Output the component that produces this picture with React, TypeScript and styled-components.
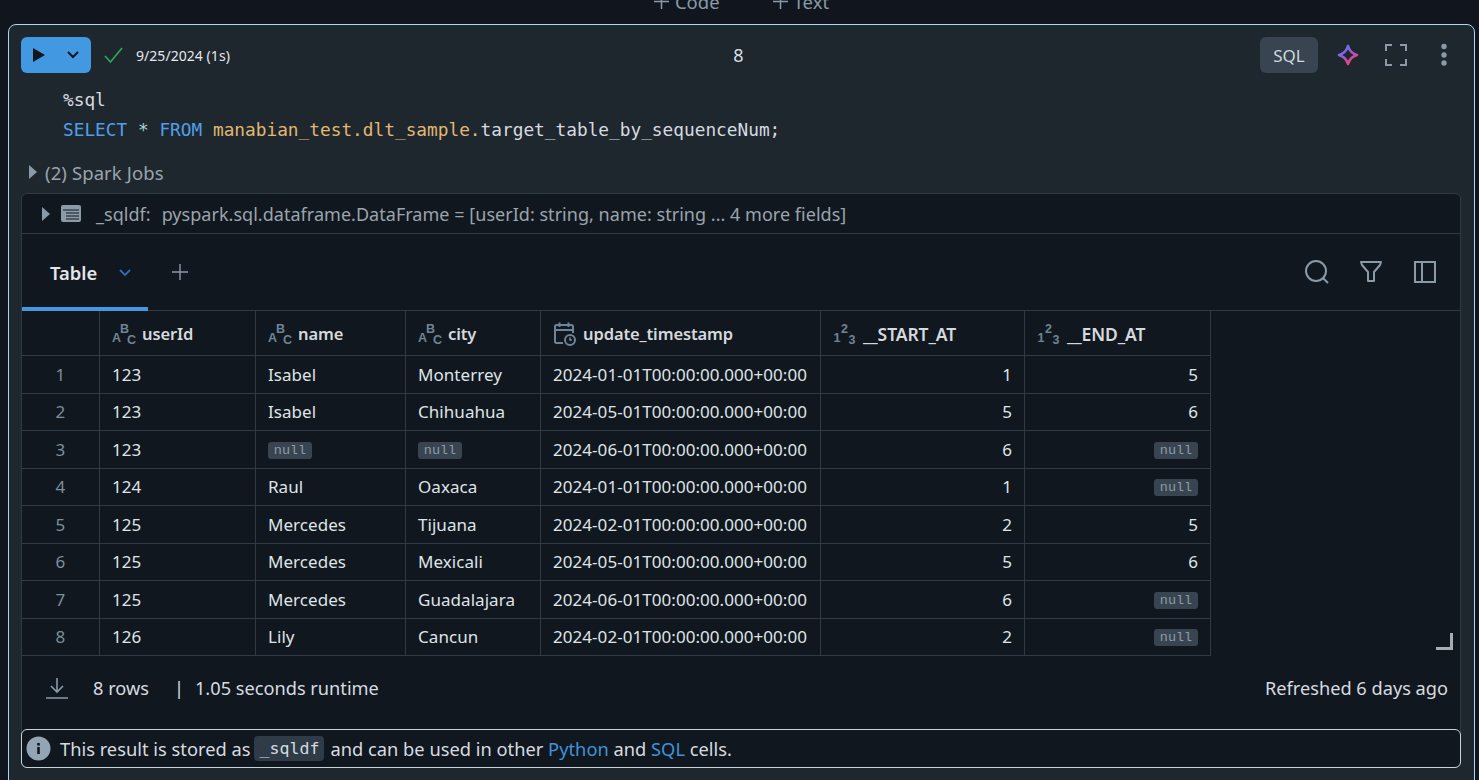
import React from "react";
import styled, { createGlobalStyle } from "styled-components";

const Global = createGlobalStyle`
  html, body { margin: 0; padding: 0; background: #11161e; }
  #root { width: 1479px; height: 780px; overflow: hidden; }
  * { box-sizing: border-box; }
`;

const SANS = `"Noto Sans", "Open Sans", sans-serif`;
const MONO = `"DejaVu Sans Mono", "Liberation Mono", monospace`;

const Page = styled.div`
  width: 1479px;
  height: 780px;
  overflow: hidden;
  background: #11161e;
  font-family: ${SANS};
  font-size: 18px;
  color: #dde2e6;
`;
const AddBar = styled.div`
  height: 24px;
  display: flex;
  justify-content: center;
  gap: 52px;
  padding-left: 3px;
  overflow: hidden;
`;
const AddButton = styled.span`
  display: flex;
  align-items: center;
  gap: 5px;
  height: 24px;
  margin-top: -11px;
  color: #8a9aa8;
  font-size: 18.5px;
`;
const Cell = styled.section`
  width: 1467px;
  height: 790px;
  margin-left: 8px;
  padding: 12px 13px 0 12px;
  background: #1f272e;
  border: 1px solid #a8d6f3;
  border-radius: 8px;
`;
const Toolbar = styled.div`
  display: grid;
  grid-template-columns: 1fr auto 1fr;
  align-items: center;
  height: 36px;
  margin-right: 5px;
`;
const ToolLeft = styled.div`
  display: flex;
  align-items: center;
`;
const RunButton = styled.div`
  width: 70px;
  height: 36px;
  display: flex;
  align-items: center;
  justify-content: space-between;
  padding: 0 11px 0 12px;
  background: #4299e1;
  border-radius: 6px;
`;
const Check = styled.svg`
  margin-left: 12px;
  width: 20px;
  height: 18px;
`;
const RunMeta = styled.span`
  margin-left: 13px;
  font-size: 14px;
  letter-spacing: 0.05px;
  color: #e4e8ec;
`;
const CellNumber = styled.span`
  font-size: 18px;
  color: #d5dde3;
`;
const ToolRight = styled.div`
  display: flex;
  align-items: center;
  justify-content: flex-end;
`;
const LangBadge = styled.span`
  width: 58px;
  height: 36px;
  display: flex;
  align-items: center;
  justify-content: center;
  background: #38444f;
  border-radius: 6px;
  font-size: 17px;
  color: #cfd8df;
`;
const Sparkle = styled.svg`
  margin-left: 19px;
  width: 22px;
  height: 22px;
`;
const Expand = styled.svg`
  margin-left: 25px;
  width: 24px;
  height: 24px;
`;
const Dots = styled.svg`
  margin-left: 31px;
  width: 10px;
  height: 24px;
  margin-right: 7px;
`;
const Code = styled.pre`
  margin: 12px 0 0 42px;
  font-family: ${MONO};
  font-size: 17.8px;
  line-height: 30px;
  color: #d6dbe0;
`;
const Kw = styled.span`
  color: #4f9fe6;
`;
const Star = styled.span`
  color: #a5d8cf;
`;
const Ident = styled.span`
  color: #e0b872;
`;
const Jobs = styled.div`
  display: flex;
  align-items: center;
  height: 26px;
  margin-top: 14px;
  padding-left: 8px;
  color: #9aa4ad;
  font-size: 18.5px;
  letter-spacing: 0.1px;
`;
const Caret = styled.svg`
  width: 8px;
  height: 14px;
  flex: none;
`;
const JobsLabel = styled.span`
  margin-left: 8px;
`;
const Panel = styled.div`
  width: 1440px;
  height: 575px;
  margin-top: 8px;
  position: relative;
  background: #11171e;
  border: 1px solid #2f3a44;
  border-radius: 6px;
`;
const SchemaRow = styled.div`
  display: flex;
  align-items: center;
  height: 40px;
  padding-left: 20px;
  border-bottom: 1px solid #2f3a44;
  color: #9aa4ad;
  font-size: 18px;
  letter-spacing: 0.03px;
`;
const TableGlyph = styled.svg`
  width: 20px;
  height: 17px;
  margin-left: 11px;
`;
const VarName = styled.span`
  margin-left: 15px;
`;
const VarType = styled.span`
  margin-left: 11px;
`;
const TabsRow = styled.div`
  display: flex;
  align-items: stretch;
  height: 77px;
  border-bottom: 1px solid #2f3a44;
`;
const ActiveTab = styled.div`
  width: 126px;
  height: 77px;
  display: flex;
  align-items: center;
  padding: 4px 0 0 28px;
  border-bottom: 4px solid #4299e1;
  font-weight: 600;
  color: #e2e6ea;
  font-size: 18.4px;
`;
const TabChevron = styled.svg`
  margin: 0 0 0 20px;
  width: 16px;
  height: 16px;
`;
const AddTab = styled.svg`
  margin: 29px 0 0 23px;
  width: 18px;
  height: 18px;
`;
const TabTools = styled.div`
  margin-left: auto;
  display: flex;
  align-items: center;
  gap: 30px;
  padding: 0 23px 0 0;
`;
const ToolGlyph = styled.svg`
  width: 24px;
  height: 26px;
`;
const Grid = styled.div`
  width: 1189px;
`;
const Row = styled.div<{ $head?: boolean }>`
  display: grid;
  grid-template-columns: 78px 156px 150px 135px 280px 204px 186px;
  height: ${(p) => (p.$head ? "45px" : "37.5px")};
  border-bottom: 1px solid #2f3a44;
`;
const Td = styled.div<{ $right?: boolean; $index?: boolean }>`
  display: flex;
  align-items: center;
  justify-content: ${(p) => (p.$right ? "flex-end" : p.$index ? "center" : "flex-start")};
  padding: 0 12px;
  border-right: 1px solid #2f3a44;
  font-size: 17px;
  letter-spacing: 0.05px;
  color: ${(p) => (p.$index ? "#7d8e9c" : "#dfe4e8")};
  white-space: nowrap;
`;
const Th = styled(Td)<{ $caps?: boolean }>`
  padding-top: 1px;
  font-weight: 600;
  gap: 6px;
  font-size: ${(p) => (p.$caps ? "17.5px" : "16.5px")};
  letter-spacing: -0.1px;
  color: #d5dade;
`;
const TypeGlyph = styled.svg`
  width: 24px;
  height: 24px;
  flex: none;
`;
const Null = styled.span`
  width: 44px;
  height: 17px;
  margin-top: 2px;
  display: flex;
  align-items: center;
  justify-content: center;
  background: #38444f;
  border-radius: 3px;
  font-family: "Liberation Mono", monospace;
  font-size: 13.5px;
  letter-spacing: 0;
  color: #8a9aa8;
`;
const Corner = styled.div`
  position: absolute;
  right: 7px;
  top: 439px;
  width: 17px;
  height: 17px;
  border-right: 3px solid #a9adb1;
  border-bottom: 3px solid #a9adb1;
`;
const Footer = styled.div`
  display: flex;
  align-items: center;
  height: 65px;
  padding: 0 12px 2px 24px;
  color: #d6dbe0;
  font-size: 18.2px;
`;
const Rows = styled.span`
  margin-left: 25px;
`;
const Pipe = styled.span`
  margin-left: 25px;
`;
const Runtime = styled.span`
  margin-left: 11px;
`;
const Refreshed = styled.span`
  margin-left: auto;
`;
const Info = styled.div`
  display: flex;
  align-items: center;
  width: 1440px;
  height: 39px;
  margin: 8px 0 0 -1px;
  padding-left: 4px;
  border: 1px solid #c7d3db;
  border-radius: 6px;
  font-size: 18.3px;
  color: #d6dbe0;
`;
const InfoIcon = styled.svg`
  width: 25px;
  height: 25px;
  flex: none;
`;
const InfoText = styled.span`
  margin-left: 9px;
  display: flex;
  align-items: center;
  white-space: pre;
`;
const Chip = styled.code`
  display: inline-flex;
  align-items: center;
  justify-content: center;
  width: 70px;
  height: 25px;
  margin: 0 6px 0 4px;
  background: #2f3b46;
  border-radius: 4px;
  font-family: ${MONO};
  font-size: 16.6px;
  color: #d6dbe0;
`;
const Link = styled.a`
  color: #3f93d8;
`;

const cols = ["userId", "name", "city", "update_timestamp", "__START_AT", "__END_AT"];
type Rec = [string, string | null, string | null, string, string, string | null];
const data: Rec[] = [
  ["123", "Isabel", "Monterrey", "2024-01-01T00:00:00.000+00:00", "1", "5"],
  ["123", "Isabel", "Chihuahua", "2024-05-01T00:00:00.000+00:00", "5", "6"],
  ["123", null, null, "2024-06-01T00:00:00.000+00:00", "6", null],
  ["124", "Raul", "Oaxaca", "2024-01-01T00:00:00.000+00:00", "1", null],
  ["125", "Mercedes", "Tijuana", "2024-02-01T00:00:00.000+00:00", "2", "5"],
  ["125", "Mercedes", "Mexicali", "2024-05-01T00:00:00.000+00:00", "5", "6"],
  ["125", "Mercedes", "Guadalajara", "2024-06-01T00:00:00.000+00:00", "6", null],
  ["126", "Lily", "Cancun", "2024-02-01T00:00:00.000+00:00", "2", null],
];

const G = "#8a9aa8";
const T = "#6f8496";

const glyphText = {
  fontFamily: '"Liberation Sans", sans-serif',
  fontWeight: 700,
  fontSize: 12.5,
  letterSpacing: 0,
  fill: T,
};

function AbcIcon() {
  return (
    <TypeGlyph viewBox="0 0 24 24" aria-hidden>
      <text x="0" y="20" style={glyphText}>A</text>
      <text x="8" y="11" style={glyphText}>B</text>
      <text x="15" y="22" style={glyphText}>C</text>
    </TypeGlyph>
  );
}
function NumIcon() {
  return (
    <TypeGlyph viewBox="0 0 24 24" aria-hidden>
      <text x="0.500" y="20" style={glyphText}>1</text>
      <text x="8" y="11" style={glyphText}>2</text>
      <text x="15.500" y="22" style={glyphText}>3</text>
    </TypeGlyph>
  );
}
function CalIcon() {
  return (
    <TypeGlyph viewBox="0 0 24 24" aria-hidden>
      <path d="M10 21H3.500a1.500 1.500 0 0 1-1.500-1.500V4.500A1.500 1.500 0 0 1 3.500 3h15A1.500 1.500 0 0 1 20 4.500V11M2 8h18M6.500 0.500V5M15.500 0.500V5" fill="none" stroke={T} strokeWidth="2" />
      <circle cx="17" cy="18" r="5" fill="none" stroke={T} strokeWidth="2" />
      <path d="M17 15.500V18h2" fill="none" stroke={T} strokeWidth="1.600" />
    </TypeGlyph>
  );
}
const headIcon = [AbcIcon, AbcIcon, AbcIcon, CalIcon, NumIcon, NumIcon];

export default function App() {
  return (
    <Page>
      <Global />
      <AddBar>
        <AddButton>
          <svg width="17" height="17" viewBox="0 0 17 17"><path d="M8.500 1v15M1 8.500h15" stroke={G} strokeWidth="1.500" /></svg>
          Code
        </AddButton>
        <AddButton>
          <svg width="17" height="17" viewBox="0 0 17 17"><path d="M8.500 1v15M1 8.500h15" stroke={G} strokeWidth="1.500" /></svg>
          Text
        </AddButton>
      </AddBar>
      <Cell>
        <Toolbar>
          <ToolLeft>
            <RunButton>
              <svg width="12" height="14" viewBox="0 0 12 14"><path d="M0 0l12 7-12 7z" fill="#11171e" /></svg>
              <svg width="14" height="10" viewBox="0 0 14 10"><path d="M2 2l5 5 5-5" fill="none" stroke="#11171e" strokeWidth="2" /></svg>
            </RunButton>
            <Check viewBox="0 0 20 18"><path d="M2 10l5.500 6L19 2" fill="none" stroke="#2ea553" strokeWidth="1.800" /></Check>
            <RunMeta>9/25/2024 (1s)</RunMeta>
          </ToolLeft>
          <CellNumber>8</CellNumber>
          <ToolRight>
            <LangBadge>SQL</LangBadge>
            <Sparkle viewBox="0 0 22 22">
              <defs>
                <linearGradient id="spark" x1="0.1" y1="0.1" x2="0.7" y2="1">
                  <stop offset="0" stopColor="#4f7ff0" />
                  <stop offset="0.5" stopColor="#a855d8" />
                  <stop offset="1" stopColor="#ff3d5e" />
                </linearGradient>
              </defs>
              <path d="M11 2c1.500 5 3.500 7.500 9 9-5.500 1.500-7.500 4-9 9-1.500-5-3.500-7.500-9-9 5.500-1.500 7.500-4 9-9z" fill="none" stroke="url(#spark)" strokeWidth="2.600" strokeLinejoin="round" />
            </Sparkle>
            <Expand viewBox="0 0 24 24">
              <path d="M8 2H2v6M16 2h6v6M8 22H2v-6M16 22h6v-6" fill="none" stroke={G} strokeWidth="2" />
            </Expand>
            <Dots viewBox="0 0 10 24">
              <circle cx="5" cy="3.500" r="2.700" fill={G} />
              <circle cx="5" cy="12" r="2.700" fill={G} />
              <circle cx="5" cy="20" r="2.700" fill={G} />
            </Dots>
          </ToolRight>
        </Toolbar>
        <Code>
          {"%sql\n"}
          <Kw>SELECT</Kw> <Star>*</Star> <Kw>FROM</Kw> <Ident>manabian_test.dlt_sample.</Ident>
          {"target_table_by_sequenceNum;"}
        </Code>
        <Jobs>
          <Caret viewBox="0 0 8 14"><path d="M0 0l8 7-8 7z" fill={G} /></Caret>
          <JobsLabel>(2) Spark Jobs</JobsLabel>
        </Jobs>
        <Panel>
          <SchemaRow>
            <Caret viewBox="0 0 8 14"><path d="M0 0l8 7-8 7z" fill={G} /></Caret>
            <TableGlyph viewBox="0 0 20 17">
              <rect width="20" height="17" rx="2" fill={G} />
              <path d="M2 5h16M5 8h13M5 11h13M5 14h13" stroke="#11171e" strokeWidth="1.200" />
            </TableGlyph>
            <VarName>_sqldf:</VarName>
            <VarType>pyspark.sql.dataframe.DataFrame = [userId: string, name: string ... 4 more fields]</VarType>
          </SchemaRow>
          <TabsRow>
            <ActiveTab>
              Table
              <TabChevron viewBox="0 0 16 16"><path d="M3 5l5 5 5-5" fill="none" stroke="#2f6cb0" strokeWidth="1.800" /></TabChevron>
            </ActiveTab>
            <AddTab viewBox="0 0 18 18"><path d="M9 1v16M1 9h16" stroke={G} strokeWidth="1.400" /></AddTab>
            <TabTools>
              <ToolGlyph viewBox="0 0 24 26">
                <circle cx="11" cy="12" r="10" fill="none" stroke={G} strokeWidth="2" />
                <path d="M18 19l5 5" stroke={G} strokeWidth="2" />
              </ToolGlyph>
              <ToolGlyph viewBox="0 0 24 26">
                <path d="M2 3h20l-1 3-6 7v9h-6v-9L3 6z" fill="none" stroke={G} strokeWidth="2" strokeLinejoin="round" />
              </ToolGlyph>
              <ToolGlyph viewBox="0 0 24 26">
                <rect x="2" y="3" width="20" height="20" fill="none" stroke={G} strokeWidth="2" />
                <path d="M9 3v20" stroke={G} strokeWidth="2" />
              </ToolGlyph>
            </TabTools>
          </TabsRow>
          <Grid>
            <Row $head>
              <Td $index />
              {cols.map((c, i) => {
                const Icon = headIcon[i];
                return (
                  <Th key={c} $caps={i > 3}>
                    <Icon />
                    {c}
                  </Th>
                );
              })}
            </Row>
            {data.map((r, i) => (
              <Row key={i}>
                <Td $index>{i + 1}</Td>
                <Td>{r[0]}</Td>
                <Td>{r[1] ?? <Null>null</Null>}</Td>
                <Td>{r[2] ?? <Null>null</Null>}</Td>
                <Td>{r[3]}</Td>
                <Td $right>{r[4]}</Td>
                <Td $right>{r[5] ?? <Null>null</Null>}</Td>
              </Row>
            ))}
          </Grid>
          <Corner />
          <Footer>
            <svg width="22" height="22" viewBox="0 0 22 22">
              <path d="M11 1v14M5 9l6 6 6-6M0 21h22" fill="none" stroke={G} strokeWidth="1.600" />
            </svg>
            <Rows>8 rows</Rows>
            <Pipe>|</Pipe>
            <Runtime>1.05 seconds runtime</Runtime>
            <Refreshed>Refreshed 6 days ago</Refreshed>
          </Footer>
          <Info>
            <InfoIcon viewBox="0 0 25 25">
              <circle cx="12.500" cy="12.500" r="12" fill="#93a5b5" />
              <rect x="11.200" y="11" width="2.600" height="7" fill="#11171e" />
              <rect x="11.200" y="7" width="2.600" height="2.600" fill="#11171e" />
            </InfoIcon>
            <InfoText>
              This result is stored as<Chip>_sqldf</Chip>and can be used in other <Link>Python</Link> and <Link>SQL</Link> cells.
            </InfoText>
          </Info>
        </Panel>
      </Cell>
    </Page>
  );
}
